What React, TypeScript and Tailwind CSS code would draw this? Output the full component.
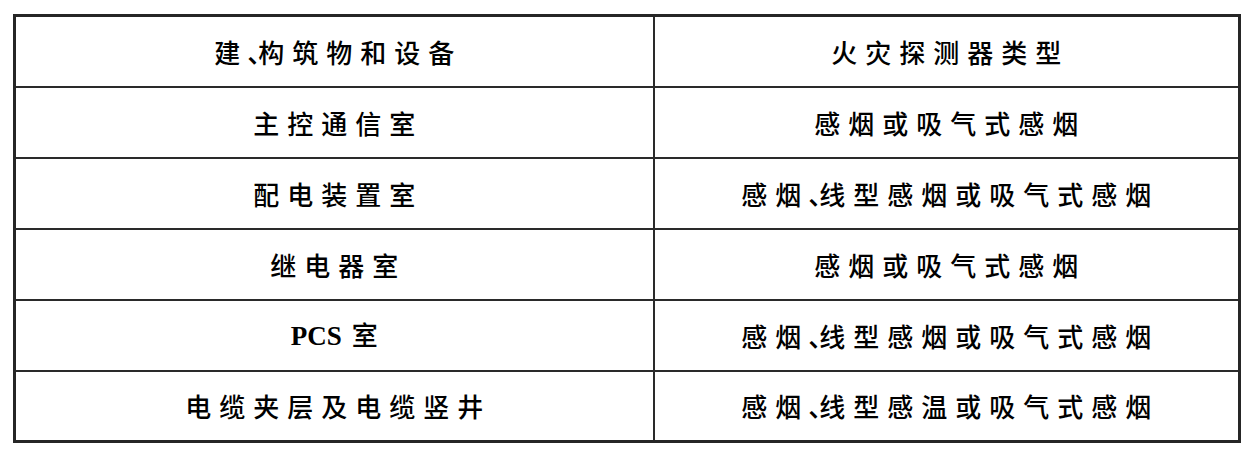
const rows: [React.ReactNode, React.ReactNode][] = [
  [<>建<P />构筑物和设备</>, "火灾探测器类型"],
  ["主控通信室", "感烟或吸气式感烟"],
  ["配电装置室", <>感烟<P />线型感烟或吸气式感烟</>],
  ["继电器室", "感烟或吸气式感烟"],
  [
    <>
      <span className="font-['Liberation_Serif'] font-bold tracking-normal text-[27px]">PCS</span>
      <span className="ml-[10px]">室</span>
    </>,
    <>感烟<P />线型感烟或吸气式感烟</>,
  ],
  ["电缆夹层及电缆竖井", <>感烟<P />线型感温或吸气式感烟</>],
];

// 顿号 sits in the gap between characters, like the original typesetting
function P() {
  return (
    <span className="inline-block w-[10px] tracking-normal">
      <span className="-ml-[1px]">、</span>
    </span>
  );
}

export default function App() {
  return (
    <div className="w-[1252px] h-[454px] bg-white pt-[14px] pl-[13px]">
      <table className="w-[1228px] border-collapse border-[3px] border-[#262626] font-['Noto_Sans_CJK_SC',sans-serif] text-[26px] font-medium text-black">
        <tbody>
          {rows.map(([a, b], i) => (
            <tr key={i} className="h-[71px]">
              <td className="w-[639px] border-2 border-[#2a2a2a] text-center align-middle p-0">
                <span className="tracking-[8px] pl-[8px]">{a}</span>
              </td>
              <td className="border-2 border-[#2a2a2a] text-center align-middle p-0">
                <span className="tracking-[8px] pl-[8px]">{b}</span>
              </td>
            </tr>
          ))}
        </tbody>
      </table>
    </div>
  );
}
